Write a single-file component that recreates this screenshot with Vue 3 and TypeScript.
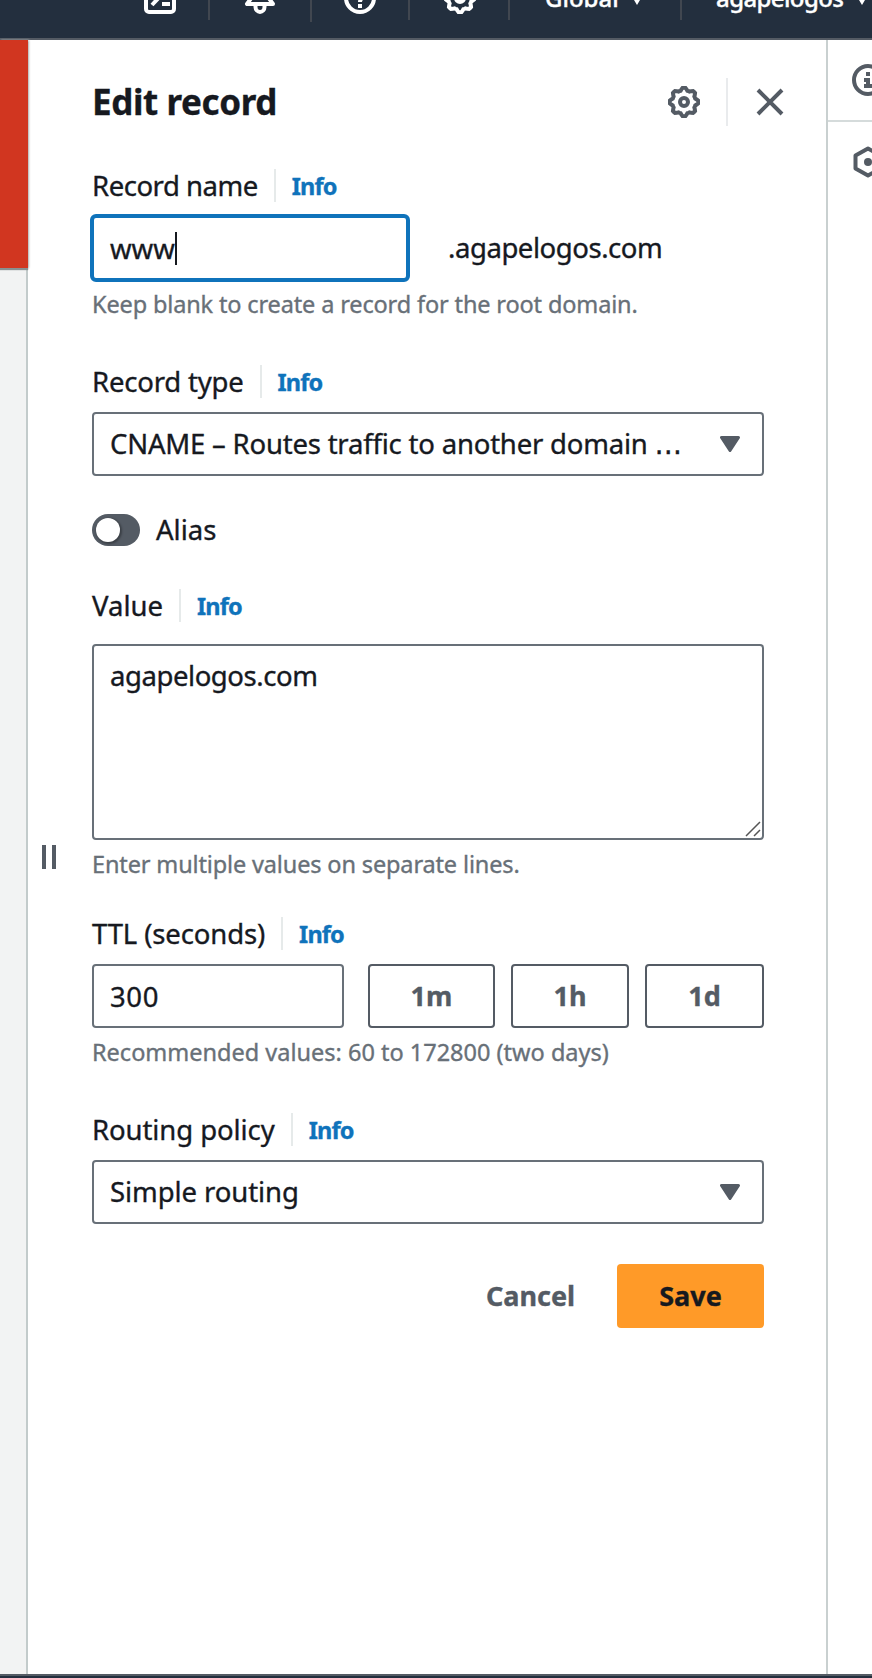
<script setup lang="ts">
import { ref } from 'vue'

const recordName = ref('www')
const value = ref('agapelogos.com')
const ttl = ref('300')
const alias = ref(false)

const gearPath = Array.from({ length: 64 }, (_, i) => {
  const a = (i / 64) * Math.PI * 2
  const r = 13 + 1.3 * Math.tanh(3 * Math.cos(8 * a))
  return `${i ? 'L' : 'M'}${(16 + r * Math.sin(a)).toFixed(2)} ${(16 - r * Math.cos(a)).toFixed(2)}`
}).join('') + 'Z'
</script>

<template>
  <div class="app">
    <header class="topbar">
      <div class="cell terminal">
        <svg width="32" height="32" viewBox="0 0 32 32" fill="none" stroke="#fff" stroke-width="4">
          <rect x="2" y="2" width="28" height="28" rx="3" />
          <path d="M8 9l7 6.500-7 7.500M18 22h8" />
        </svg>
      </div>
      <div class="cell bell">
        <svg width="32" height="32" viewBox="0 0 32 32" fill="none" stroke="#fff" stroke-width="4" stroke-linejoin="round">
          <path d="M16 2c-5 0-8 4-8 8v5l-5 7h26l-5-7v-5c0-4-3-8-8-8zM11.500 23v2a4.500 5 0 0 0 9 0v-2" />
        </svg>
      </div>
      <div class="cell help">
        <svg width="32" height="32" viewBox="0 0 32 32" fill="none" stroke="#fff" stroke-width="4">
          <circle cx="16" cy="16" r="14" />
          <path d="M11 13c0-7 10-6 10-1 0 4-5 3-5 8M16 22v4" />
        </svg>
      </div>
      <div class="cell settings">
        <svg width="32" height="32" viewBox="0 0 32 32" fill="none" stroke="#fff" stroke-width="4">
          <path :d="gearPath" /><circle cx="16" cy="16" r="4" />
        </svg>
      </div>
      <div class="cell region">
        <span class="t-global">Global</span>
        <svg width="12" height="10" viewBox="0 0 12 10"><path d="M0 0h12L6 10z" fill="#fff" /></svg>
      </div>
      <div class="cell account">
        <span class="t-account">agapelogos</span>
        <svg width="12" height="10" viewBox="0 0 12 10"><path d="M0 0h12L6 10z" fill="#fff" /></svg>
      </div>
    </header>

    <div class="body">
      <aside class="left"><div class="alert"></div></aside>

      <main class="panel">
        <div class="handle"><i></i><i></i></div>
        <div class="title-row">
          <h1>Edit record</h1>
          <svg class="gear" width="32" height="32" viewBox="0 0 32 32" fill="none" stroke="#545b64" stroke-width="4">
            <path :d="gearPath" /><circle cx="16" cy="16" r="4" />
          </svg>
          <span class="rule"></span>
          <svg class="close" width="28" height="28" viewBox="0 0 28 28" fill="none" stroke="#545b64" stroke-width="4">
            <path d="M2 2l24 24M26 2L2 26" />
          </svg>
        </div>

        <div class="label"><span class="l-name">Record name</span><a class="info">Info</a></div>
        <div class="row">
          <div class="box focus"><span class="v-www">{{ recordName }}</span><i class="caret"></i></div>
          <span class="suffix">.agapelogos.com</span>
        </div>
        <p class="hint h-name">Keep blank to create a record for the root domain.</p>

        <div class="label after-hint"><span class="l-type">Record type</span><a class="info">Info</a></div>
        <div class="box select">
          <span class="v-type">CNAME – Routes traffic to another domain <span class="dots">…</span></span>
          <svg class="arrow" width="20" height="16" viewBox="0 0 20 16"><path d="M1.500 1.500h17L10 14.500z" fill="#545b64" stroke="#545b64" stroke-width="3" stroke-linejoin="round" /></svg>
        </div>

        <div class="toggle-row">
          <span class="toggle" :class="{ on: alias }"><i></i></span><span class="l-alias">Alias</span>
        </div>

        <div class="label value-label"><span class="l-value">Value</span><a class="info">Info</a></div>
        <div class="box area">
          <span class="v-area">{{ value }}</span>
          <svg class="grip" width="16" height="16" viewBox="0 0 16 16" stroke="#555" stroke-width="1.500"><path d="M1 15L15 1M9 15l6-6" /></svg>
        </div>
        <p class="hint h-value">Enter multiple values on separate lines.</p>

        <div class="label ttl-label"><span class="l-ttl">TTL (seconds)</span><a class="info">Info</a></div>
        <div class="row">
          <div class="box ttl"><span class="v-ttl">{{ ttl }}</span></div>
          <button class="m">1m</button>
          <button class="h">1h</button>
          <button class="d">1d</button>
        </div>
        <p class="hint h-ttl">Recommended values: 60 to 172800 (two days)</p>

        <div class="label after-hint"><span class="l-policy">Routing policy</span><a class="info">Info</a></div>
        <div class="box select">
          <span class="v-policy">Simple routing</span>
          <svg class="arrow" width="20" height="16" viewBox="0 0 20 16"><path d="M1.500 1.500h17L10 14.500z" fill="#545b64" stroke="#545b64" stroke-width="3" stroke-linejoin="round" /></svg>
        </div>

        <div class="actions">
          <button class="cancel">Cancel</button>
          <button class="save">Save</button>
        </div>
      </main>

      <aside class="right">
        <div class="tool first">
          <svg width="32" height="32" viewBox="0 0 32 32" fill="none" stroke="#545b64" stroke-width="4">
            <circle cx="16" cy="16" r="14" />
            <path d="M14 10h4M12 16h4v8M12 22h8" />
          </svg>
        </div>
        <div class="tool">
          <svg width="32" height="32" viewBox="0 0 32 32" fill="none" stroke="#545b64" stroke-width="4" stroke-linejoin="round">
            <path d="M16 2.500l12.500 7v13L16 29.500 3.500 22.500v-13z" /><circle cx="16" cy="16" r="4" fill="#545b64" stroke="none" />
          </svg>
        </div>
      </aside>
    </div>
    <footer class="bottombar"></footer>
  </div>
</template>

<style>
html, body { margin: 0; background: #fff; }
</style>

<style scoped>
* { box-sizing: border-box; }
.app {
  display: flex; flex-direction: column; width: 872px; height: 1678px; overflow: hidden;
  font-family: "Noto Sans", "Open Sans", sans-serif; font-size: 27.5px; color: #16191f;
  background: #fff; white-space: nowrap; -webkit-text-stroke: 0.35px currentColor;
}
svg { display: block; flex: none; }
.topbar { flex: none; display: flex; height: 40px; background: #232f3e; border-bottom: 2px solid #545b64; overflow: hidden; color: #fff; }
.cell { display: flex; flex: none; height: 20px; border-right: 2px solid #414750; }
.cell > svg { margin-top: -18px; }
.terminal { width: 210px; padding-left: 144px; }
.bell { width: 102px; height: 22px; padding-left: 34px; }
.help { width: 98px; padding-left: 32px; }
.settings { width: 100px; padding-left: 34px; }
.region { width: 172px; padding-left: 35px; }
.account { width: 190px; padding-left: 34px; border: 0; }
.region, .account { font-size: 24px; font-weight: 500; line-height: 32px; }
.region span, .account span { margin-top: -18px; flex: none; }
.region > svg, .account > svg { margin-top: -5px; }
.t-global { width: 86px; }
.t-account { width: 140px; letter-spacing: -0.6px; }

.body { flex: 1; display: flex; min-height: 0; }
.left { width: 28px; background: #f2f3f3; border-right: 2px solid #c3cbcb; flex: none; }
.alert { width: 28px; height: 228px; background: #d13620; box-shadow: 0 2px 1px #899091, 1px 0 2px #bbb; }
.panel { position: relative; width: 798px; flex: none; padding: 38px 62px 0 64px; }
.handle { position: absolute; left: 14px; top: 805px; display: flex; gap: 6px; }
.handle i { width: 4px; height: 24px; background: #545b64; }
.right { flex: 1; border-left: 2px solid #c9d0d0; overflow: hidden; }
.tool { padding: 24px 0 0 24px; height: 80px; }
.first { border-bottom: 2px solid #d5dbdb; height: 82px; }

.title-row { display: flex; align-items: center; height: 48px; }
h1 { margin: 0; flex: 1; font-size: 35px; font-weight: 700; line-height: 48px; letter-spacing: -0.4px; }
.rule { width: 2px; height: 48px; background: #e9ebed; margin: 0 28px 0 26px; }
.close { margin: 0 -20px 0 0; }

.label { display: flex; align-items: center; height: 33px; line-height: 33px; }
.title-row + .label { margin-top: 43px; }
.label + .row, .label + .box { margin-top: 14px; }
.after-hint { margin-top: 45px; }
.info { margin-left: 16px; padding-left: 16px; border-left: 2px solid #e6eaea; color: #0f73bb; font-size: 23.500px; font-weight: 700; line-height: 33px; height: 33px; padding-top: 1px; letter-spacing: -0.85px; }
.l-name { letter-spacing: -0.47px; }
.l-type { letter-spacing: -0.2px; }
.l-ttl { letter-spacing: -0.13px; }
.l-policy, .v-policy { letter-spacing: -0.08px; }
.v-type { letter-spacing: -0.2px; }
.dots { font-family: "DejaVu Sans", sans-serif; line-height: 1; }
.v-ttl { letter-spacing: 0.6px; }
.suffix, .v-area { letter-spacing: -0.44px; }
.h-name, .h-value { letter-spacing: -0.14px; }
.row { display: flex; align-items: center; height: 64px; }
.box { position: relative; display: flex; align-items: center; height: 64px; padding: 0 16px; border: 2px solid #687078; border-radius: 4px; background: #fff; }
.select > span { padding-bottom: 2px; }
.focus { width: 320px; height: 68px; margin: 0 0 0 -2px; border: 4px solid #0f73bb; border-radius: 6px; flex: none; }
.caret { width: 2px; height: 33px; background: #16191f; }
.suffix { margin-left: 38px; padding-bottom: 2px; }
.hint { margin: 8px 0 0; line-height: 32px; font-size: 23.500px; color: #687078; }
.arrow { margin-left: auto; margin-right: 6px; }
.toggle-row { display: flex; align-items: center; height: 32px; margin-top: 38px; }
.l-alias { padding-bottom: 2px; }
.toggle { width: 48px; height: 32px; padding: 4px; border-radius: 16px; background: #545b64; margin-right: 16px; }
.toggle i { display: block; width: 24px; height: 24px; border-radius: 50%; background: #fff; box-shadow: 1px 1px 2px 1px rgba(0, 0, 0, .3); }
.toggle.on i { margin-left: 16px; }
.value-label { margin-top: 43px; }
.label + .area { height: 196px; margin-top: 22px; align-items: flex-start; padding-top: 8px; line-height: 44px; }
.grip { position: absolute; right: 1px; bottom: 1px; }
.ttl-label { margin-top: 37px; }
.ttl { width: 252px; margin-right: 24px; }
button { height: 64px; padding: 0 0 2px; border: 2px solid #545b64; border-radius: 4px; background: #fff; color: #545b64; font: 700 27px "Noto Sans", sans-serif; }
.m { width: 127px; margin-right: 16px; }
.h { width: 118px; margin-right: 16px; }
.d { width: 119px; }
.actions { display: flex; justify-content: flex-end; margin-top: 40px; }
.cancel { border: 0; width: 88px; margin-right: 43px; }
.save { width: 147px; border: 0; background: #ff9a28; color: #16191f; }
.bottombar { flex: none; height: 4px; background: #232f3e; border-top: 2px solid #545b64; }
</style>
